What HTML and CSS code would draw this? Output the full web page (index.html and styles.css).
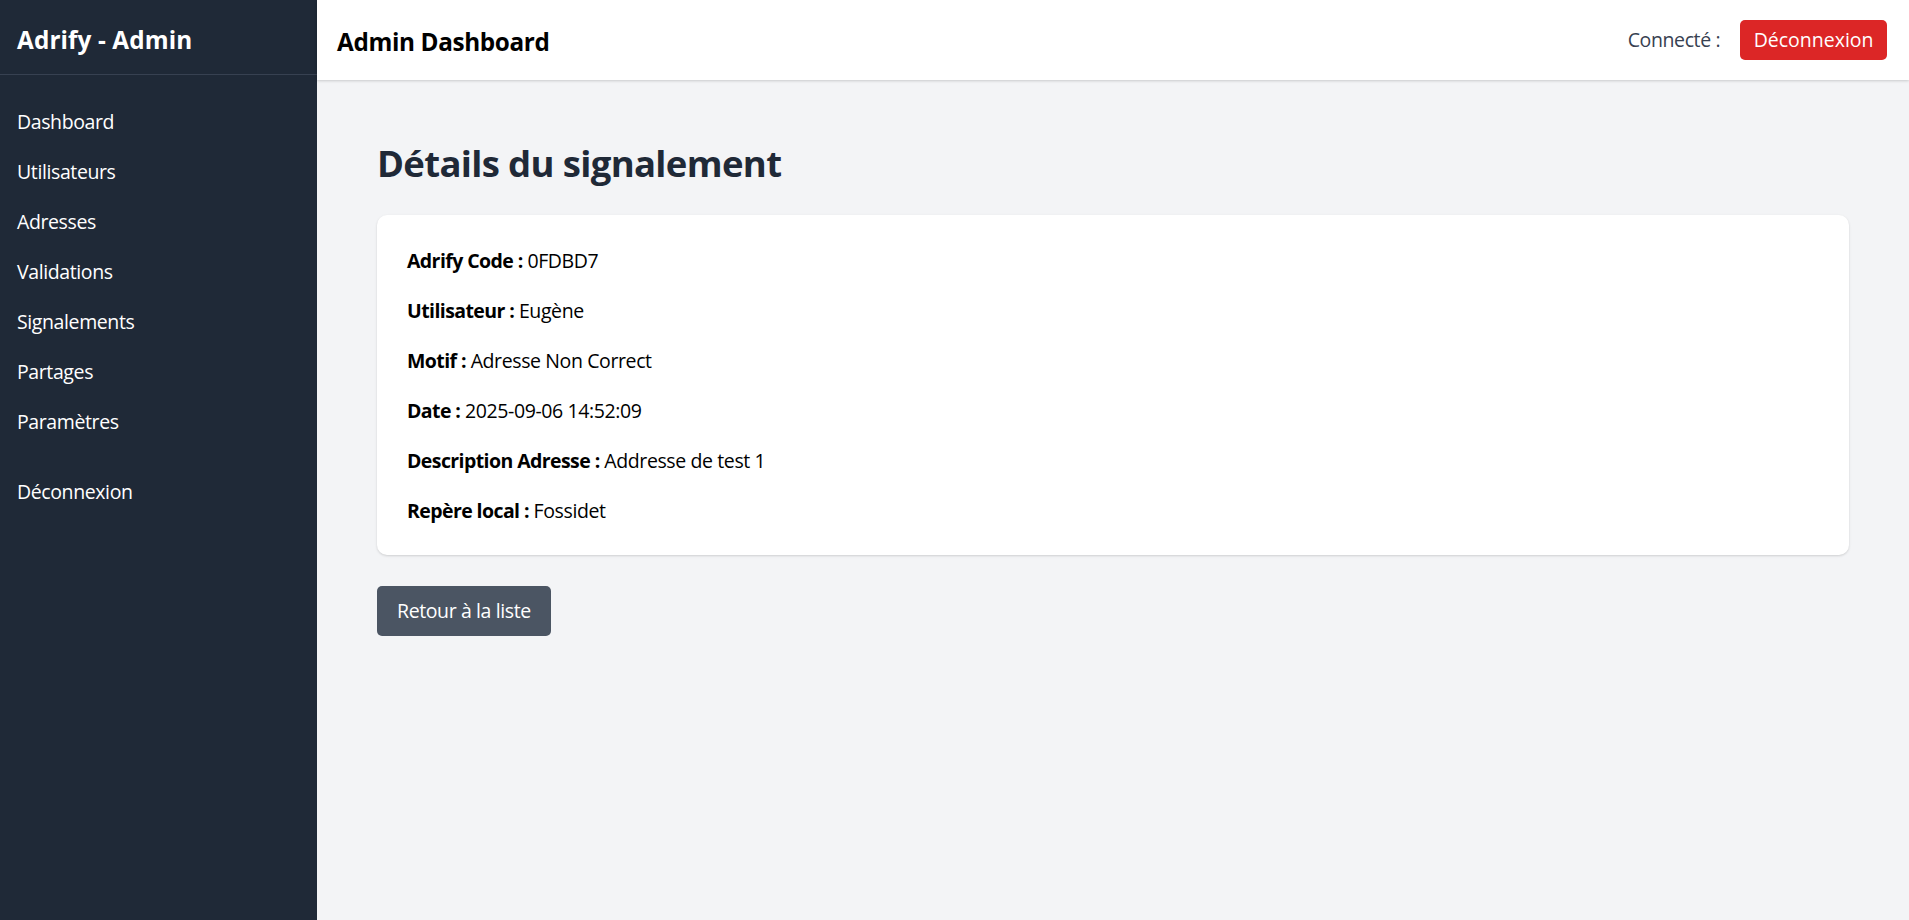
FILE: index.html
```html
<!DOCTYPE html>
<html lang="fr">
<head>
<meta charset="utf-8">
<title>Adrify - Admin</title>
<link rel="stylesheet" href="styles.css">
</head>
<body>
<div class="layout">
  <aside class="sidebar">
    <div class="brand">Adrify - Admin</div>
    <nav class="nav">
      <a class="nav-link" href="#">Dashboard</a>
      <a class="nav-link" href="#">Utilisateurs</a>
      <a class="nav-link" href="#">Adresses</a>
      <a class="nav-link" href="#">Validations</a>
      <a class="nav-link" href="#">Signalements</a>
      <a class="nav-link" href="#">Partages</a>
      <a class="nav-link" href="#">Paramètres</a>
      <a class="nav-link nav-logout" href="#">Déconnexion</a>
    </nav>
  </aside>
  <div class="main">
    <header class="topbar">
      <div class="topbar-title">Admin Dashboard</div>
      <div class="topbar-right">
        <span class="connected">Connecté :</span>
        <button class="btn-logout">Déconnexion</button>
      </div>
    </header>
    <main class="content">
      <h1 class="page-title">Détails du signalement</h1>
      <section class="card">
        <p class="row"><strong>Adrify Code :</strong> 0FDBD7</p>
        <p class="row"><strong>Utilisateur :</strong> Eugène</p>
        <p class="row"><strong>Motif :</strong> Adresse Non Correct</p>
        <p class="row"><strong>Date :</strong> 2025-09-06 14:52:09</p>
        <p class="row"><strong>Description Adresse :</strong> Addresse de test 1</p>
        <p class="row"><strong>Repère local :</strong> Fossidet</p>
      </section>
      <div class="actions">
        <a class="btn-back" href="#">Retour à la liste</a>
      </div>
    </main>
  </div>
</div>
</body>
</html>
```

FILE: styles.css
```css
* { box-sizing: border-box; }
html, body { margin: 0; padding: 0; height: 100%; }
body {
  font-family: "Open Sans", "Noto Sans", sans-serif;
  font-size: 19.5px;
  line-height: 29.2px;
  letter-spacing: -0.02em;
  color: #111827;
  background: #f3f4f6;
}
strong { letter-spacing: -0.03em; }
.layout {
  display: flex;
  height: 920px;
}
.sidebar {
  width: 317px;
  flex: 0 0 317px;
  background: #1f2937;
  color: #ffffff;
}
.brand {
  height: 75px;
  padding: 5px 17px 0 17px;
  display: flex;
  align-items: center;
  font-size: 24.3px;
  font-weight: 700;
  letter-spacing: 0.005em;
  border-bottom: 1px solid #374151;
}
.nav {
  display: flex;
  flex-direction: column;
  padding-top: 22px;
}
.nav-link {
  display: block;
  padding: 10.4px 17px;
  color: #ffffff;
  text-decoration: none;
}
.nav-logout { margin-top: 20px; }
.main {
  flex: 1;
  display: flex;
  flex-direction: column;
  min-width: 0;
}
.topbar {
  height: 80px;
  background: #ffffff;
  display: flex;
  align-items: center;
  justify-content: space-between;
  padding: 3px 22px 0 20px;
  box-shadow: 0 1px 3px rgba(0,0,0,0.12), 0 1px 2px rgba(0,0,0,0.06);
  position: relative;
  z-index: 1;
}
.topbar-title {
  font-size: 24.3px;
  font-weight: 700;
  letter-spacing: -0.015em;
  color: #000000;
}
.topbar-right {
  display: flex;
  align-items: center;
  gap: 20px;
  margin-top: -3px;
}
.connected { color: #374151; }
.btn-logout {
  font: inherit;
  height: 40px;
  padding: 0 13.5px;
  border: 0;
  border-radius: 5px;
  background: #dc2626;
  color: #ffffff;
}
.content {
  padding: 62px 60px 0 60px;
}
.page-title {
  margin: 0 0 29px 0;
  font-size: 36.5px;
  line-height: 43.8px;
  font-weight: 700;
  letter-spacing: -0.018em;
  color: #1f2937;
}
.card {
  background: #ffffff;
  border-radius: 10px;
  box-shadow: 0 1px 3px rgba(0,0,0,0.1), 0 1px 2px rgba(0,0,0,0.06);
  padding: 31.7px 30px 29.5px 30px;
  display: flex;
  flex-direction: column;
  gap: 20.8px;
}
.row { margin: 0; color: #000; }
.row strong { font-weight: 700; }
.actions { margin-top: 30.5px; }
.btn-back {
  display: inline-flex;
  align-items: center;
  height: 50px;
  padding: 0 20px;
  border-radius: 5px;
  background: #4b5563;
  color: #ffffff;
  text-decoration: none;
}
```
